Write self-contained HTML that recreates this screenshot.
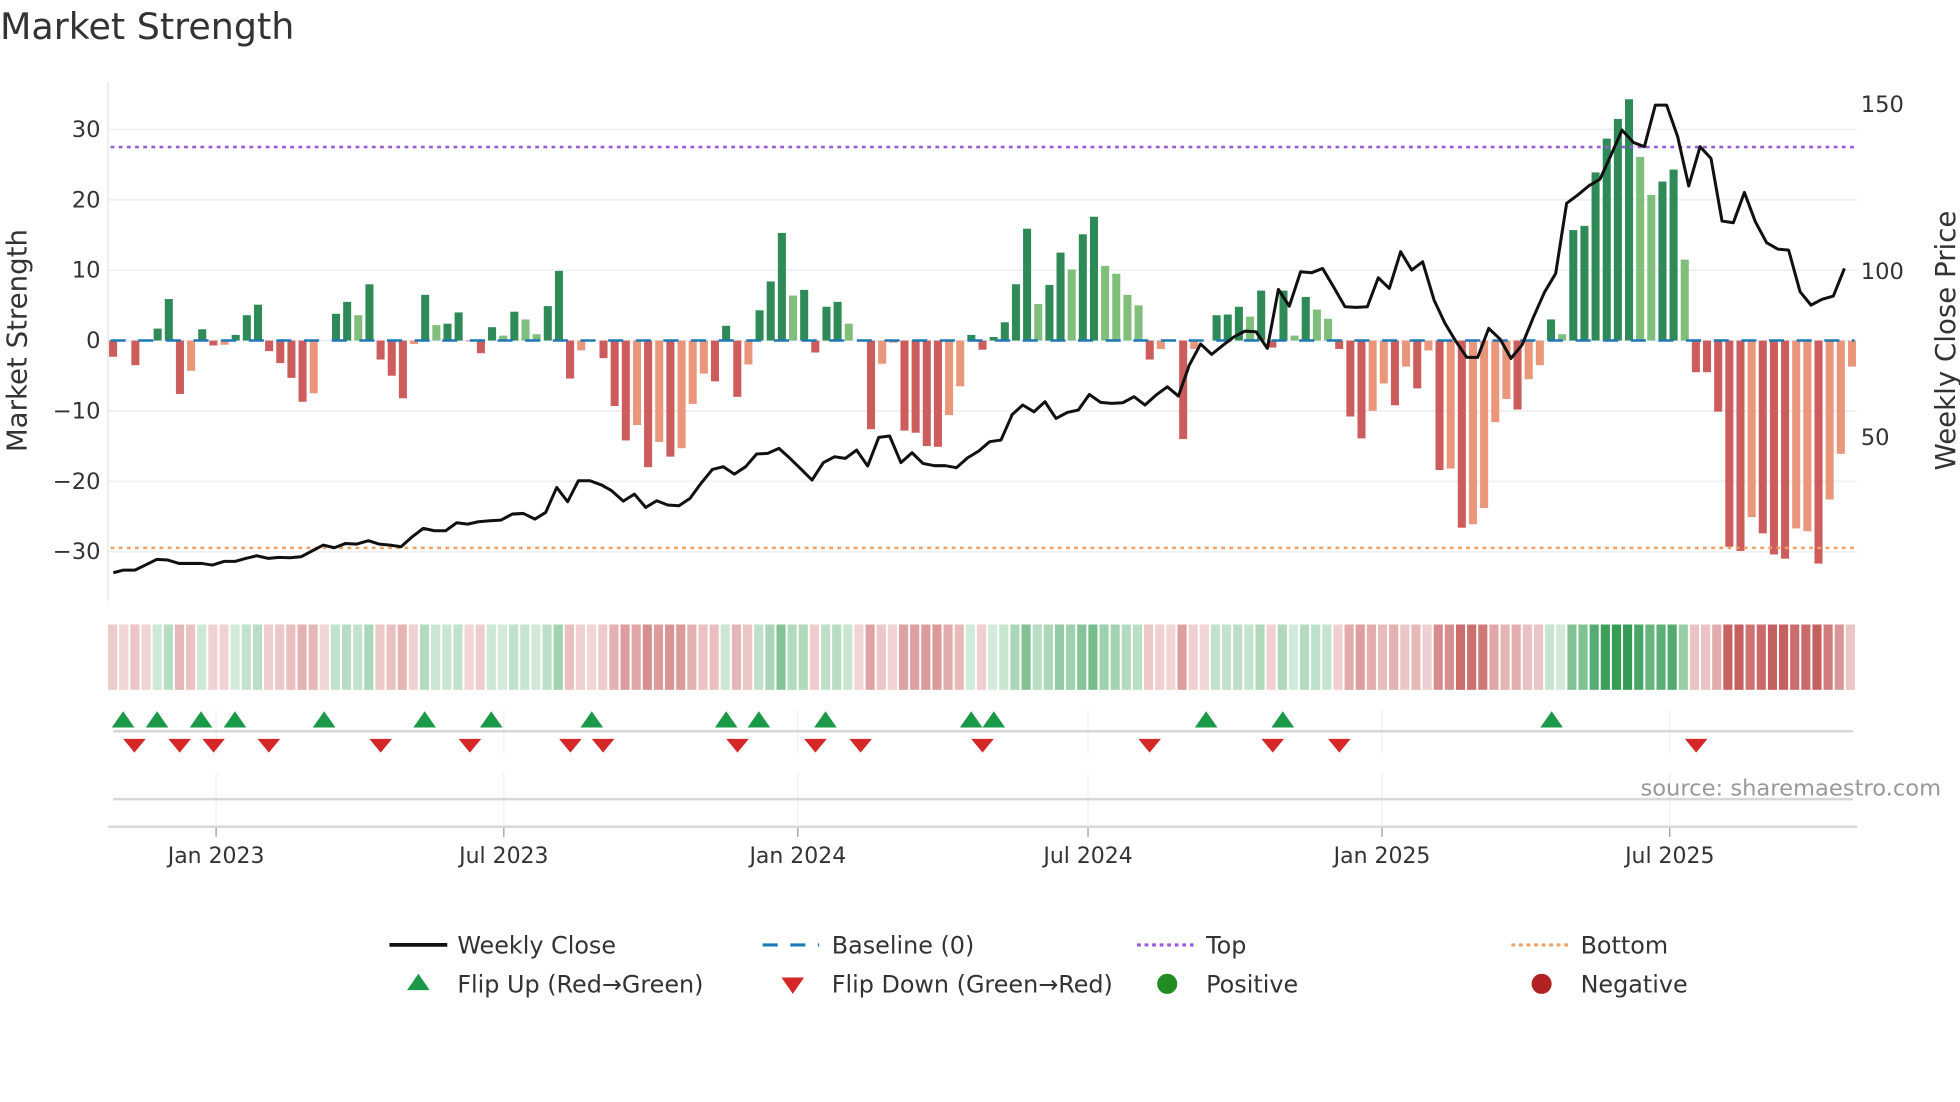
<!DOCTYPE html>
<html><head><meta charset="utf-8"><style>
html,body{margin:0;padding:0;background:#fff;}
svg{display:block;font-family:"DejaVu Sans","Liberation Sans",sans-serif;}
</style></head><body>
<svg id="s" width="1960" height="1102" viewBox="0 0 1560 877" xmlns="http://www.w3.org/2000/svg">
<text x="0" y="31" font-size="29" fill="#333">Market Strength</text>
<g id="grid"></g>
<g id="bars"></g>
<g id="over"></g>
<text transform="translate(21,271) rotate(-90)" text-anchor="middle" font-size="22" fill="#333">Market Strength</text>
<text transform="translate(1556,271) rotate(-90)" text-anchor="middle" font-size="22" fill="#333">Weekly Close Price</text>
<text x="1545" y="633" text-anchor="end" font-size="18" fill="#999">source: sharemaestro.com</text>
<g font-size="19" fill="#333">
<line x1="310" y1="752" x2="356" y2="752" stroke="#111" stroke-width="3"/>
<text x="364" y="759">Weekly Close</text>
<line x1="607" y1="752" x2="652" y2="752" stroke="#1f77b4" stroke-width="2.5" stroke-dasharray="12 10"/>
<text x="662" y="759">Baseline (0)</text>
<line x1="905" y1="752" x2="950" y2="752" stroke="#9b59e0" stroke-width="2.5" stroke-dasharray="3 3"/>
<text x="960" y="759">Top</text>
<line x1="1203" y1="752" x2="1248" y2="752" stroke="#f0a060" stroke-width="2.5" stroke-dasharray="3 3"/>
<text x="1258" y="759">Bottom</text>
<polygon points="324,788 333,775 342,788" fill="#1a9a48"/>
<text x="364" y="790">Flip Up (Red→Green)</text>
<polygon points="622,778 640,778 631,791" fill="#d62728"/>
<text x="662" y="790">Flip Down (Green→Red)</text>
<circle cx="929" cy="783" r="8" fill="#228b22"/>
<text x="960" y="790">Positive</text>
<circle cx="1227" cy="783" r="8" fill="#b22222"/>
<text x="1258" y="790">Negative</text>
</g>
</svg>
<script>
var NS="http://www.w3.org/2000/svg";
function el(p,t,a,txt){var e=document.createElementNS(NS,t);for(var k in a)e.setAttribute(k,a[k]);if(txt!==undefined)e.textContent=txt;p.appendChild(e);return e;}
var G=document.getElementById('grid'),B=document.getElementById('bars'),O=document.getElementById('over');
function Y(v){return 271-5.6*v;}
[30,20,10,0,-10,-20,-30].forEach(function(v){el(G,'line',{x1:86,x2:1478,y1:Y(v),y2:Y(v),stroke:'#eef0f4','stroke-width':1.5});
 el(G,'text',{x:80,y:Y(v)+6,'text-anchor':'end','font-size':18,fill:'#333'},(v<0?'\u2212'+(-v):''+v));});
[[150,82],[100,215],[50,347]].forEach(function(a){el(G,'text',{x:1481,y:a[1]+7,'font-size':18,fill:'#333'},''+a[0]);});
el(G,'line',{x1:86,x2:86,y1:65,y2:478,stroke:'#e4e4e4','stroke-width':1});
var vals=[[-2.3,'R'],[0,'Z'],[-3.5,'R'],[0,'Z'],[1.7,'G'],[5.9,'G'],[-7.6,'R'],[-4.3,'S'],[1.6,'G'],[-0.7,'R'],[-0.6,'S'],[0.8,'G'],[3.6,'G'],[5.1,'G'],[-1.5,'R'],[-3.2,'R'],[-5.3,'R'],[-8.7,'R'],[-7.5,'S'],[0,'Z'],[3.8,'G'],[5.5,'G'],[3.6,'L'],[8,'G'],[-2.7,'R'],[-5,'R'],[-8.2,'R'],[-0.5,'S'],[6.5,'G'],[2.2,'L'],[2.4,'G'],[4,'G'],[-0.1,'R'],[-1.8,'R'],[1.9,'G'],[0.7,'L'],[4.1,'G'],[3,'L'],[0.9,'L'],[4.9,'G'],[9.9,'G'],
[-5.4,'R'],[-1.4,'S'],[0,'Z'],[-2.5,'R'],[-9.3,'R'],[-14.2,'R'],[-12,'S'],[-18,'R'],[-14.4,'S'],[-16.5,'R'],[-15.3,'S'],[-9,'S'],[-4.7,'S'],[-5.8,'R'],[2.1,'G'],[-8,'R'],[-3.4,'S'],[4.3,'G'],[8.4,'G'],[15.3,'G'],[6.4,'L'],[7.2,'G'],[-1.7,'R'],[4.8,'G'],[5.5,'G'],[2.4,'L'],[0,'Z'],
[-12.6,'R'],[-3.3,'S'],[-0.3,'S'],[-12.8,'R'],[-13.1,'R'],[-15,'R'],[-15.1,'R'],[-10.6,'S'],[-6.5,'S'],[0.8,'G'],[-1.3,'R'],[0.5,'G'],[2.6,'G'],[8,'G'],[15.9,'G'],[5.2,'L'],[7.9,'G'],[12.5,'G'],[10.1,'L'],[15.1,'G'],[17.6,'G'],[10.6,'L'],[9.5,'L'],[6.5,'L'],[5,'L'],
[-2.7,'R'],[-1.2,'S'],[0,'Z'],[-14,'R'],[-1.2,'S'],[0,'Z'],[3.6,'G'],[3.7,'G'],[4.8,'G'],[3.4,'L'],[7.1,'G'],[-1,'R'],[7.1,'G'],[0.7,'L'],[6.2,'G'],[4.4,'L'],[3.1,'L'],[-1.2,'R'],[-10.8,'R'],[-13.9,'R'],[-10,'S'],[-6.1,'S'],[-9.2,'R'],[-3.7,'S'],[-6.8,'R'],[-1.4,'S'],
[-18.4,'R'],[-18.2,'S'],[-26.6,'R'],[-26.1,'S'],[-23.8,'S'],[-11.6,'S'],[-8.3,'S'],[-9.8,'R'],[-5.5,'S'],[-3.5,'S'],[3,'G'],[0.9,'L'],[15.7,'G'],[16.3,'G'],[23.9,'G'],[28.7,'G'],[31.5,'G'],[34.3,'G'],[26.1,'L'],[20.7,'L'],[22.6,'G'],[24.3,'G'],[11.5,'L'],[-4.5,'R'],[-4.5,'R'],[-10.1,'R'],[-29.3,'R'],[-29.9,'R'],[-25.1,'S'],[-27.4,'R'],[-30.4,'R'],[-31,'R'],[-26.7,'S'],[-27.1,'S'],[-31.7,'R'],[-22.6,'S'],[-16.1,'S'],[-3.7,'S']];
var col={G:'#2e8b57',L:'#7fbf7b',R:'#cd5c5c',S:'#e9967a',Z:'#fff'};
var n=vals.length,pitch=(1474-90)/(n-1);
function mix(a,b,t){return a.map(function(v,k){return Math.round(v+(b[k]-v)*t);});}
vals.forEach(function(a,i){var x=90+i*pitch,v=a[0];
 if(v!==0){var y0=Y(Math.max(v,0)),h=Math.abs(v)*5.6;el(B,'rect',{x:x-3.2,y:y0,width:6.4,height:h,fill:col[a[1]]});}
 var t=Math.min(Math.abs(v)/30,1);t=0.08+0.92*t;
 var c;if(v>0){c=mix([228,243,232],[52,156,84],t);}else{c=mix([245,222,222],[198,96,96],t);}
 el(B,'rect',{x:86+i*((1478-86)/n),y:497,width:(1478-86)/n-1.6,height:52,fill:'rgb('+c.join(',')+')'});
});
el(O,'line',{x1:88,x2:1476,y1:117,y2:117,stroke:'#9b59e0','stroke-width':2,'stroke-dasharray':'3 3.5'});
el(O,'line',{x1:88,x2:1476,y1:436,y2:436,stroke:'#f0a060','stroke-width':2,'stroke-dasharray':'3 3.5'});
el(O,'line',{x1:88,x2:1476,y1:271,y2:271,stroke:'#1f77b4','stroke-width':2,'stroke-dasharray':'12 10'});
var segs=[[105,220,[[25,1058],[55,1050],[90,1050],[125,1033],[155,1018],[188,1020],[222,1030],[255,1030],[290,1030],[322,1035],[357,1024],[390,1024],[422,1015],[455,1007],[490,1015],[522,1012],[555,1013],[588,1010],[620,993],[655,975],[688,983],[722,970],[755,972],[790,962],[822,972],[855,975],[888,980],[922,950],[955,925],[988,932],[1022,932],[1055,908],[1088,912],[1120,905],[1155,902],[1188,900],[1222,882],[1255,880],[1290,897],[1322,877],[1355,802]]],
[555,220,[[38,845],[70,782],[105,782],[140,795],[170,812],[205,843],[238,822],[272,862],[305,842],[338,855],[372,857],[405,835],[438,790],[472,748],[505,740],[538,762],[572,740],[605,702],[638,700],[672,685],[705,715],[738,747],[771,780],[805,728],[838,710],[871,715],[905,690],[938,738],[971,652],[1004,648],[1038,728],[1071,698],[1104,730],[1138,737],[1171,737],[1204,743],[1238,713],[1271,693],[1304,665],[1338,660],[1371,585]]],
[1005,200,[[20,645],[53,615],[87,635],[120,605],[153,655],[187,637],[220,630],[253,583],[287,607],[320,610],[353,608],[387,590],[420,615],[453,585],[487,560],[520,588],[553,495],[587,432],[620,463],[653,436],[687,410],[720,393],[753,395],[787,445],[820,268],[853,318],[887,215],[920,218],[953,205],[987,263],[1020,320],[1053,322],[1087,320],[1120,233],[1153,265],[1187,155],[1220,210],[1253,185],[1287,300],[1320,370]]],
[1455,80,[[0,780],[35,832],[68,832],[101,745],[135,777],[168,835],[201,795],[235,712],[268,637],[302,580],[335,370],[368,345],[402,317],[435,297],[468,225],[501,150],[535,187],[568,200],[601,75],[635,75],[668,170],[701,318],[735,200],[768,235],[801,423],[835,428],[868,337],[901,425],[935,488],[968,507],[1001,510],[1035,635],[1068,675],[1101,658],[1135,648],[1168,565]]]];
var pts=[];segs.forEach(function(s){s[2].forEach(function(p){pts.push(((s[0]+p[0]/3)/1.2564).toFixed(1)+','+((s[1]+p[1]/3)/1.2564).toFixed(1));});});
el(O,'polyline',{points:pts.join(' '),fill:'none',stroke:'#111','stroke-width':2.4,'stroke-linejoin':'round'});
var months=[172,401,635,866,1100,1329],labels=['Jan 2023','Jul 2023','Jan 2024','Jul 2024','Jan 2025','Jul 2025'];
months.forEach(function(x,i){el(O,'line',{x1:x,x2:x,y1:565,y2:600,stroke:'#eef0f2','stroke-width':1});
 el(O,'line',{x1:x,x2:x,y1:615,y2:658,stroke:'#eef0f2','stroke-width':1});
 el(O,'line',{x1:x,x2:x,y1:658,y2:666,stroke:'#999','stroke-width':1});
 el(O,'text',{x:x,y:687,'text-anchor':'middle','font-size':17.5,fill:'#333'},labels[i]);});
el(O,'line',{x1:90,x2:1475,y1:582,y2:582,stroke:'#d4d8dc','stroke-width':2});
el(O,'line',{x1:90,x2:1475,y1:636,y2:636,stroke:'#d4d8dc','stroke-width':2});
el(O,'line',{x1:86,x2:1478,y1:658,y2:658,stroke:'#d4d8dc','stroke-width':2});
[98,125,160,187,258,338,391,471,578,604,657,773,791,960,1021,1235].forEach(function(x){el(O,'polygon',{points:(x-9)+',579 '+x+',566 '+(x+9)+',579',fill:'#1a9a48'});});
[107,143,170,214,303,374,454,480,587,649,685,782,915,1013,1066,1350].forEach(function(x){el(O,'polygon',{points:(x-9)+',588 '+(x+9)+',588 '+x+',599',fill:'#d62728'});});
</script>
</body></html>
